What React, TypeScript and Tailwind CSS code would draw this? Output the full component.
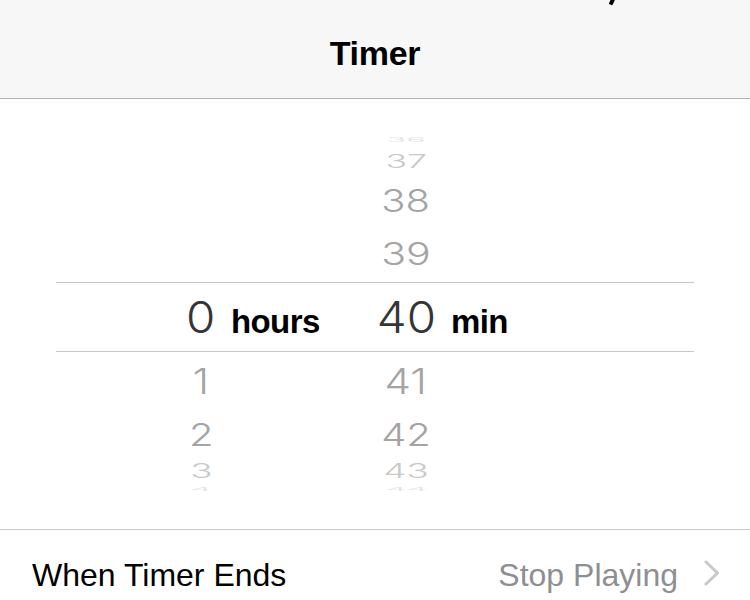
import React from "react";

type Row = {
  hours: string;
  min: string;
  height: string;
  size: string;
  squash: string;
  tone: string;
};

// drum rows above and below the selection band, top to bottom
const above: Row[] = [
  { hours: "", min: "36", height: "h-[16px]", size: "text-[30px]", squash: "scale-y-[0.2]", tone: "text-[#e2e2e2]" },
  { hours: "", min: "37", height: "h-[26px]", size: "text-[33px]", squash: "scale-y-[0.55]", tone: "text-[#c9c9c9]" },
  { hours: "", min: "38", height: "h-[52px]", size: "text-[37px]", squash: "scale-y-[0.85]", tone: "text-[#a4a4a4]" },
  { hours: "", min: "39", height: "h-[56px]", size: "text-[38px]", squash: "scale-y-[0.82]", tone: "text-[#a4a4a4]" },
];

const below: Row[] = [
  { hours: "1", min: "41", height: "h-[56px]", size: "text-[39px]", squash: "scale-y-[0.92]", tone: "text-[#a4a4a4]" },
  { hours: "2", min: "42", height: "h-[52px]", size: "text-[37px]", squash: "scale-y-[0.85]", tone: "text-[#a4a4a4]" },
  { hours: "3", min: "43", height: "h-[22px]", size: "text-[34px]", squash: "scale-y-[0.57]", tone: "text-[#c9c9c9]" },
  { hours: "4", min: "44", height: "h-[14px]", size: "text-[31px]", squash: "scale-y-[0.17]", tone: "text-[#e2e2e2]" },
];

const digitFont = "font-['Inter',sans-serif] font-light";

function DrumRow({ row }: { row: Row }) {
  const digit = `inline-block leading-none scale-x-[1.08] ${digitFont} ${row.size} ${row.squash} ${row.tone}`;
  return (
    <div className={`${row.height} pl-[173px] grid grid-cols-[56px_132px_90px] grid-rows-1`}>
      <div className="h-full flex items-center justify-center">
        {row.hours && <span className={digit}>{row.hours}</span>}
      </div>
      <div />
      <div className="h-full flex items-center justify-center">
        <span className={digit}>{row.min}</span>
      </div>
    </div>
  );
}

export default function App() {
  return (
    <div className="relative w-[750px] h-[600px] overflow-hidden bg-white font-['Liberation_Sans',Arial,sans-serif] text-black">
      {/* Nav bar */}
      <header className="relative h-[99px] bg-[#f7f7f7] border-b border-[#b2b2b2] flex justify-center pt-[36px]">
        <h1 className="text-[34px] font-bold leading-none tracking-[-0.3px]">Timer</h1>
        <div className="absolute left-[610px] top-[-2px] w-[4px] h-[7px] bg-black rotate-[25deg] rounded-b-[1px]" />
      </header>

      {/* Picker */}
      <section className="h-[430px] pt-[33px] flex flex-col">
        {above.map((r) => (
          <DrumRow key={r.min} row={r} />
        ))}

        <div className="mx-[56px] h-[70px] border-y border-[#c8c7cc] flex items-center">
          <div className="pl-[117px] grid grid-cols-[56px_132px_90px_auto] items-baseline">
            <div className="flex justify-center">
              <span className={`inline-block leading-none text-[44px] scale-x-[1.08] text-[#353535] ${digitFont}`}>0</span>
            </div>
            <span className="pl-[2px] text-[33px] font-bold leading-none tracking-[-0.6px]">hours</span>
            <div className="flex justify-center">
              <span className={`inline-block leading-none text-[44px] scale-x-[1.08] text-[#353535] ${digitFont}`}>40</span>
            </div>
            <span className="text-[33px] font-bold leading-none tracking-[-0.6px]">min</span>
          </div>
        </div>

        {below.map((r) => (
          <DrumRow key={r.min} row={r} />
        ))}
      </section>

      {/* When timer ends row */}
      <div className="border-t border-[#c8c7cc] h-[71px] pl-[32px] pr-[30px] pt-[29px] flex items-start justify-between">
        <span className="text-[32px] leading-none">When Timer Ends</span>
        <div className="flex items-start gap-[26px]">
          <span className="text-[32px] leading-none text-[#8e8e93]">Stop Playing</span>
          <svg width="16" height="26" viewBox="0 0 16 26" className="mt-[1px]">
            <path d="M2 2 L13.5 13 L2 24" fill="none" stroke="#c7c7cc" strokeWidth="3" strokeLinecap="round" strokeLinejoin="round" />
          </svg>
        </div>
      </div>
    </div>
  );
}
